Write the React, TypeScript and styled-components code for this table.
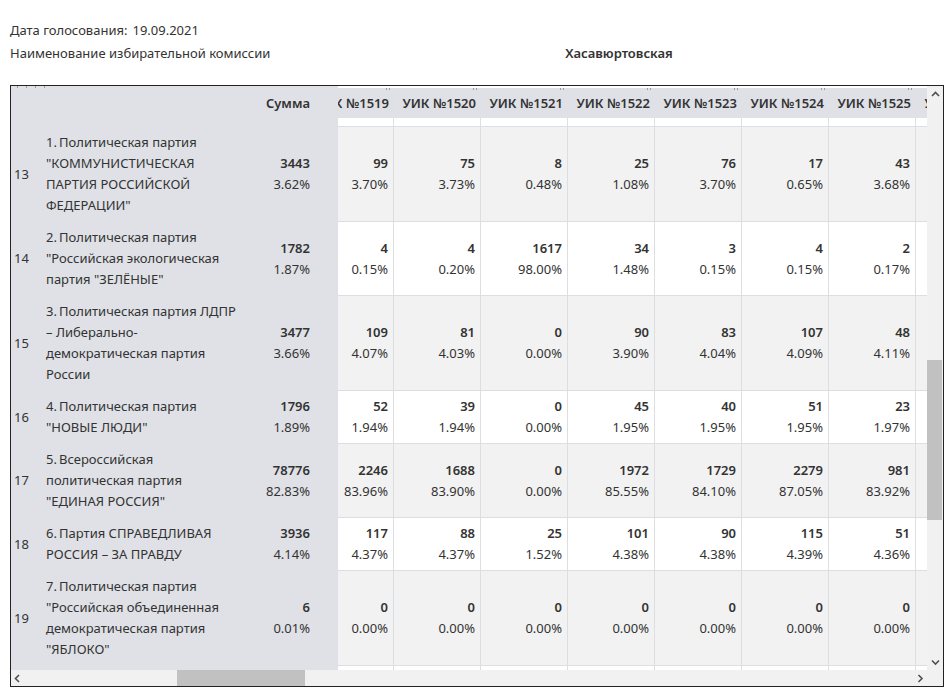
import React, { useLayoutEffect, useRef } from "react";
import styled, { createGlobalStyle } from "styled-components";

const GlobalStyle = createGlobalStyle`
  html, body { margin: 0; padding: 0; background: #fff; }
  body {
    font-family: "Noto Sans", "Open Sans", sans-serif;
    font-size: 13px;
    color: #333;
  }
`;

const FROZEN_BG = "#dfe1e6";
const LINE = "#dcdee2";

const Page = styled.div`
  width: 951px;
  box-sizing: border-box;
  padding: 19px 0 0 10px;
`;

const InfoLine = styled.div`
  display: flex;
  align-items: center;
  height: 23px;
  line-height: 23px;
`;

const InfoLabel = styled.div`
  flex: none;
  width: 277px;
`;

const InfoDate = styled.span`
  margin-left: 5px;
`;

const InfoValue = styled.div`
  flex: 1;
  text-align: center;
  font-weight: 600;
`;

const Frame = styled.div`
  margin-top: 20px;
  width: 934px;
  height: 602px;
  box-sizing: border-box;
  border: 1px solid #222;
  display: grid;
  grid-template-columns: 1fr 16px;
  grid-template-rows: 1fr 16px;
`;

const Viewport = styled.div`
  overflow: hidden;
  min-width: 0;
  min-height: 0;
`;

const Table = styled.table`
  border-collapse: separate;
  border-spacing: 0;
  table-layout: fixed;
  width: 1023px;
`;

const HeadFrozen = styled.th`
  position: sticky;
  top: 0;
  left: 0;
  z-index: 3;
  width: 327px;
  height: 32px;
  padding: 0;
  background: ${FROZEN_BG};
  font-weight: 600;
`;

const HeadCell = styled.th`
  position: sticky;
  top: 0;
  z-index: 2;
  width: 87px;
  height: 32px;
  box-sizing: border-box;
  padding: 0 5px 0 0;
  border-top: 2px solid #fff;
  background: ${FROZEN_BG};
  font-weight: 600;
  text-align: right;
  white-space: nowrap;
  overflow: hidden;

  &::after {
    content: "";
    position: absolute;
    top: 0;
    right: 4px;
    width: 2px;
    height: 2px;
    border-left: 1px solid #9a9ca0;
    border-right: 1px solid #9a9ca0;
  }
`;

const HeadMarks = styled.div`
  display: flex;
  gap: 8px;
  height: 2px;
  padding-left: 6px;
`;

const HeadMark = styled.span`
  width: 1px;
  height: 2px;
  background: #9a9ca0;
`;

const HiddenRow = styled.tr`
  height: 52px;
`;

const FrozenCell = styled.td`
  position: sticky;
  left: 0;
  z-index: 1;
  padding: 0;
  background: ${FROZEN_BG};
  border-bottom: 1px solid ${FROZEN_BG};
`;

const FrozenRow = styled.div`
  display: flex;
  align-items: center;
  line-height: 21px;
`;

const HeadFrozenRow = styled(FrozenRow)`
  height: 30px;
`;

const NumPart = styled.div`
  flex: none;
  width: 32px;
  padding-left: 3px;
  text-align: left;
`;

const NamePart = styled.div`
  flex: none;
  width: 204px;
  padding: 5px 0;
  text-align: left;
`;

const SumPart = styled.div`
  flex: none;
  width: 60px;
  padding-right: 28px;
  text-align: right;
`;

const Cell = styled.td<{ $striped: boolean }>`
  box-sizing: border-box;
  padding: 5px 5px 5px 0;
  text-align: right;
  vertical-align: middle;
  line-height: 21px;
  white-space: nowrap;
  overflow: hidden;
  border-right: 1px solid ${LINE};
  border-bottom: 1px solid ${LINE};
  background: ${(p) => (p.$striped ? "#f2f2f2" : "#fff")};
`;

const Value = styled.div`
  font-weight: 600;
`;

const Percent = styled.div``;

const VTrack = styled.div`
  background: #f1f1f1;
  display: flex;
  flex-direction: column;
`;

const HTrack = styled.div`
  background: #f1f1f1;
  display: flex;
`;

const Corner = styled.div`
  background: #f1f1f1;
`;

const ArrowBox = styled.div<{ $w: number; $h: number }>`
  flex: none;
  width: ${(p) => p.$w}px;
  height: ${(p) => p.$h}px;
  display: flex;
  align-items: center;
  justify-content: center;
`;

const Rail = styled.div<{ $vertical: boolean }>`
  flex: 1;
  display: flex;
  flex-direction: ${(p) => (p.$vertical ? "column" : "row")};
`;

const Thumb = styled.div<{ $vertical: boolean }>`
  flex: none;
  background: #c1c1c1;
  ${(p) => (p.$vertical ? "width: 15px;" : "height: 16px;")}
`;

const Chevron: React.FC<{ dir: "up" | "down" | "left" | "right" }> = ({ dir }) => {
  const d =
    dir === "up"
      ? "M1 5 L4.5 1.5 L8 5"
      : dir === "down"
      ? "M1 1.5 L4.5 5 L8 1.5"
      : dir === "left"
      ? "M5 1 L1.5 4.5 L5 8"
      : "M1.5 1 L5 4.5 L1.5 8";
  const vertical = dir === "up" || dir === "down";
  return (
    <svg
      width={vertical ? 9 : 7}
      height={vertical ? 7 : 9}
      viewBox={vertical ? "0 0 9 7" : "0 0 7 9"}
    >
      <path d={d} fill="none" stroke="#505050" strokeWidth="1.6" />
    </svg>
  );
};

type Row = {
  n: number;
  name: string[];
  sum: [string, string];
  vals: [string, string][];
};

const zero: [string, string] = ["0", "0.00%"];

const rows: Row[] = [
  {
    n: 13,
    name: [
      "1.\u2009Политическая партия",
      "\"КОММУНИСТИЧЕСКАЯ",
      "ПАРТИЯ РОССИЙСКОЙ",
      "ФЕДЕРАЦИИ\"",
    ],
    sum: ["3443", "3.62%"],
    vals: [
      ["99", "3.70%"],
      ["75", "3.73%"],
      ["8", "0.48%"],
      ["25", "1.08%"],
      ["76", "3.70%"],
      ["17", "0.65%"],
      ["43", "3.68%"],
      ["31", "3.12%"],
    ],
  },
  {
    n: 14,
    name: [
      "2.\u2009Политическая партия",
      "\"Российская экологическая",
      "партия \"ЗЕЛЁНЫЕ\"",
    ],
    sum: ["1782", "1.87%"],
    vals: [
      ["4", "0.15%"],
      ["4", "0.20%"],
      ["1617", "98.00%"],
      ["34", "1.48%"],
      ["3", "0.15%"],
      ["4", "0.15%"],
      ["2", "0.17%"],
      ["5", "0.50%"],
    ],
  },
  {
    n: 15,
    name: [
      "3.\u2009Политическая партия ЛДПР",
      "– Либерально-",
      "демократическая партия",
      "России",
    ],
    sum: ["3477", "3.66%"],
    vals: [
      ["109", "4.07%"],
      ["81", "4.03%"],
      ["0", "0.00%"],
      ["90", "3.90%"],
      ["83", "4.04%"],
      ["107", "4.09%"],
      ["48", "4.11%"],
      ["40", "4.03%"],
    ],
  },
  {
    n: 16,
    name: ["4.\u2009Политическая партия", "\"НОВЫЕ ЛЮДИ\""],
    sum: ["1796", "1.89%"],
    vals: [
      ["52", "1.94%"],
      ["39", "1.94%"],
      ["0", "0.00%"],
      ["45", "1.95%"],
      ["40", "1.95%"],
      ["51", "1.95%"],
      ["23", "1.97%"],
      ["19", "1.91%"],
    ],
  },
  {
    n: 17,
    name: ["5.\u2009Всероссийская", "политическая партия", "\"ЕДИНАЯ РОССИЯ\""],
    sum: ["78776", "82.83%"],
    vals: [
      ["2246", "83.96%"],
      ["1688", "83.90%"],
      ["0", "0.00%"],
      ["1972", "85.55%"],
      ["1729", "84.10%"],
      ["2279", "87.05%"],
      ["981", "83.92%"],
      ["830", "83.75%"],
    ],
  },
  {
    n: 18,
    name: ["6.\u2009Партия СПРАВЕДЛИВАЯ", "РОССИЯ – ЗА ПРАВДУ"],
    sum: ["3936", "4.14%"],
    vals: [
      ["117", "4.37%"],
      ["88", "4.37%"],
      ["25", "1.52%"],
      ["101", "4.38%"],
      ["90", "4.38%"],
      ["115", "4.39%"],
      ["51", "4.36%"],
      ["43", "4.34%"],
    ],
  },
  {
    n: 19,
    name: [
      "7.\u2009Политическая партия",
      "\"Российская объединенная",
      "демократическая партия",
      "\"ЯБЛОКО\"",
    ],
    sum: ["6", "0.01%"],
    vals: Array(8).fill(zero),
  },
  {
    n: 20,
    name: [
      "8.\u2009Политическая партия",
      "\"Российская партия",
      "пенсионеров за социальную",
      "справедливость\"",
    ],
    sum: ["1412", "1.48%"],
    vals: [
      ["39", "1.46%"],
      ["30", "1.49%"],
      ["2", "0.12%"],
      ["35", "1.52%"],
      ["31", "1.51%"],
      ["38", "1.45%"],
      ["17", "1.45%"],
      ["15", "1.51%"],
    ],
  },
];

const uiks = [1519, 1520, 1521, 1522, 1523, 1524, 1525, 1526];

const scrollbar = {
  vOffset: 258,
  vSize: 160,
  hOffset: 154,
  hSize: 128,
};

export default function App() {
  const viewRef = useRef<HTMLDivElement>(null);
  const tableRef = useRef<HTMLTableElement>(null);
  const focusRef = useRef<HTMLTableRowElement>(null);

  useLayoutEffect(() => {
    const v = viewRef.current;
    const t = tableRef.current;
    const r = focusRef.current;
    if (!v || !t || !r) return;
    const rowTop = r.getBoundingClientRect().top - t.getBoundingClientRect().top;
    v.scrollTop = rowTop - 41;
    v.scrollLeft = 31;
  }, []);

  return (
    <>
      <GlobalStyle />
      <Page>
        <InfoLine>
          Дата голосования:<InfoDate>19.09.2021</InfoDate>
        </InfoLine>
        <InfoLine>
          <InfoLabel>Наименование избирательной комиссии</InfoLabel>
          <InfoValue>Хасавюртовская</InfoValue>
        </InfoLine>
        <Frame>
          <Viewport ref={viewRef}>
            <Table ref={tableRef}>
              <thead>
                <tr>
                  <HeadFrozen>
                    <HeadMarks>
                      <HeadMark />
                      <HeadMark />
                      <HeadMark />
                      <HeadMark />
                    </HeadMarks>
                    <HeadFrozenRow>
                      <NumPart />
                      <NamePart />
                      <SumPart>Сумма</SumPart>
                    </HeadFrozenRow>
                  </HeadFrozen>
                  {uiks.map((u) => (
                    <HeadCell key={u}>УИК №{u}</HeadCell>
                  ))}
                </tr>
              </thead>
              <tbody>
                <HiddenRow>
                  <FrozenCell />
                  {uiks.map((u) => (
                    <Cell key={u} $striped={false} />
                  ))}
                </HiddenRow>
                {rows.map((row) => {
                  const striped = row.n % 2 === 1;
                  return (
                    <tr key={row.n} ref={row.n === 13 ? focusRef : undefined}>
                      <FrozenCell>
                        <FrozenRow>
                          <NumPart>{row.n}</NumPart>
                          <NamePart>
                            {row.name.map((l, i) => (
                              <div key={i}>{l}</div>
                            ))}
                          </NamePart>
                          <SumPart>
                            <Value>{row.sum[0]}</Value>
                            <Percent>{row.sum[1]}</Percent>
                          </SumPart>
                        </FrozenRow>
                      </FrozenCell>
                      {row.vals.map((v, i) => (
                        <Cell key={i} $striped={striped}>
                          <Value>{v[0]}</Value>
                          <Percent>{v[1]}</Percent>
                        </Cell>
                      ))}
                    </tr>
                  );
                })}
              </tbody>
            </Table>
          </Viewport>
          <VTrack>
            <ArrowBox $w={16} $h={16}>
              <Chevron dir="up" />
            </ArrowBox>
            <Rail $vertical>
              <Thumb $vertical style={{ marginTop: scrollbar.vOffset, height: scrollbar.vSize }} />
            </Rail>
            <ArrowBox $w={16} $h={16}>
              <Chevron dir="down" />
            </ArrowBox>
          </VTrack>
          <HTrack>
            <ArrowBox $w={12} $h={16}>
              <Chevron dir="left" />
            </ArrowBox>
            <Rail $vertical={false}>
              <Thumb $vertical={false} style={{ marginLeft: scrollbar.hOffset, width: scrollbar.hSize }} />
            </Rail>
            <ArrowBox $w={14} $h={16}>
              <Chevron dir="right" />
            </ArrowBox>
          </HTrack>
          <Corner />
        </Frame>
      </Page>
    </>
  );
}
